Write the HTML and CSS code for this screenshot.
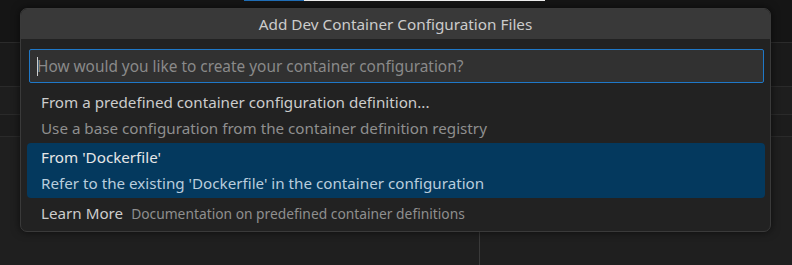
FILE: index.html
```html
<!DOCTYPE html>
<html lang="en">
<head>
    <meta charset="UTF-8">
    <meta name="viewport" content="width=device-width, initial-scale=1.0">
    <title>Add Dev Container Configuration Files</title>
    <link rel="stylesheet" href="styles.css">
</head>
<body>
    <div class="workbench">
        <div class="tabs">
            <div class="tab-indicator">
                <span class="ind-blue"></span>
                <span class="ind-white"></span>
            </div>
        </div>
        <div class="band band-1"></div>
        <div class="band band-2"></div>
        <div class="band band-3"></div>
        <div class="editor-area">
            <div class="pane-left"></div>
            <div class="pane-right"></div>
        </div>
    </div>

    <div class="quick-input">
        <div class="qi-title">Add Dev Container Configuration Files</div>
        <div class="qi-header">
            <div class="qi-box">
                <span class="caret"></span>
                <input class="qi-input" type="text" placeholder="How would you like to create your container configuration?">
            </div>
        </div>
        <div class="qi-list">
            <div class="qi-item">
                <div class="qi-label">From a predefined container configuration definition...</div>
                <div class="qi-desc">Use a base configuration from the container definition registry</div>
            </div>
            <div class="qi-item selected">
                <div class="qi-label">From 'Dockerfile'</div>
                <div class="qi-desc">Refer to the existing 'Dockerfile' in the container configuration</div>
            </div>
            <div class="qi-item single">
                <span class="qi-label">Learn More</span>
                <span class="qi-note">Documentation on predefined container definitions</span>
            </div>
        </div>
    </div>
</body>
</html>
```
FILE: styles.css
```css
* {
    margin: 0;
    padding: 0;
    box-sizing: border-box;
}

body {
    background: #1f1f1f;
    font-family: "Noto Sans", "Open Sans", sans-serif;
    width: 792px;
    height: 265px;
    overflow: hidden;
    position: relative;
}

/* background workbench */
.workbench {
    display: flex;
    flex-direction: column;
    height: 265px;
}

.tabs {
    height: 43px;
    background: #151515;
    border-bottom: 1px solid #2b2b2b;
}

.tab-indicator {
    display: flex;
    margin-left: 244px;
    height: 1px;
}

.ind-blue {
    width: 60px;
    background: #1f6fb8;
}

.ind-white {
    width: 241px;
    background: #f0f0f0;
}

.band {
    border-bottom: 1px solid #2a2a2a;
}

.band-1 {
    height: 44px;
    background: #1a1a1a;
}

.band-2 {
    height: 28px;
    background: #1e1e1e;
}

.band-3 {
    height: 22px;
    background: #1c1c1c;
}

.editor-area {
    flex: 1;
    display: flex;
}

.pane-left {
    width: 480px;
    border-right: 1px solid #3a3a3a;
}

.pane-right {
    flex: 1;
}

/* quick input dialog */
.quick-input {
    position: absolute;
    left: 20px;
    top: 8px;
    width: 751px;
    height: 224px;
    background: #222222;
    border: 1px solid #3a3a3a;
    border-radius: 7px;
    box-shadow: 0 0 8px rgba(0, 0, 0, 0.6);
    overflow: hidden;
}

.qi-title {
    height: 30px;
    background: #393939;
    color: #cccccc;
    font-size: 15.3px;
    line-height: 30px;
    text-align: center;
}

.qi-header {
    padding: 10px 6px 0 8px;
}

.qi-box {
    position: relative;
    height: 34px;
    background: #313131;
    border: 1px solid #1f78c8;
    border-radius: 2px;
}

.qi-input {
    width: 100%;
    height: 100%;
    background: transparent;
    border: none;
    outline: none;
    padding-left: 7px;
    font-family: inherit;
    font-size: 15.4px;
    color: #cccccc;
}

.qi-input::placeholder {
    color: #8a8a8a;
}

.caret {
    position: absolute;
    left: 7px;
    top: 7px;
    width: 1px;
    height: 19px;
    background: #cfcfcf;
}

.qi-list {
    padding: 5px 5px 0 6px;
}

.qi-item {
    padding: 1px 0 0 14px;
    height: 55px;
    border-radius: 4px;
}

.qi-label {
    color: #cccccc;
    font-size: 15.2px;
    line-height: 26px;
}

.qi-desc {
    color: #8f8f8f;
    font-size: 15.2px;
    line-height: 26px;
}

.qi-item.selected {
    background: #04395e;
}

.qi-item.selected .qi-label {
    color: #e6e6e6;
}

.qi-item.selected .qi-desc {
    color: #b9cddd;
}

.qi-item.single {
    height: 29px;
    display: flex;
    align-items: center;
    gap: 8px;
}

.qi-note {
    color: #8f8f8f;
    font-size: 13.8px;
}
```
